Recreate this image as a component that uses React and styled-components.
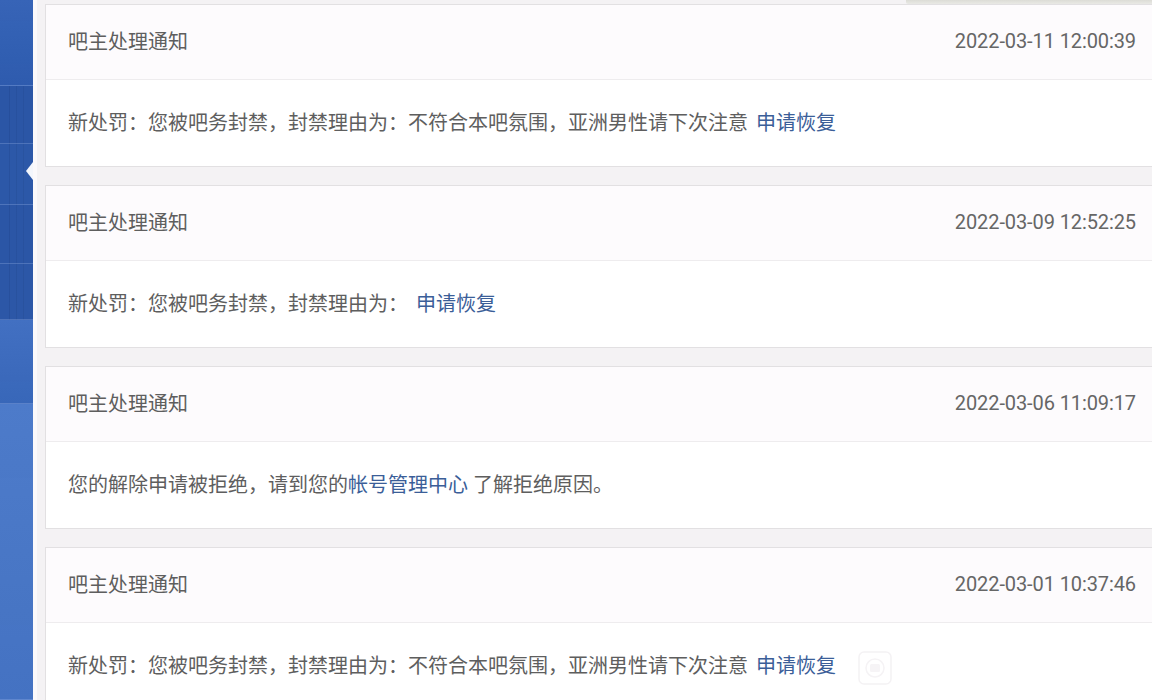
import React from "react";
import styled, { createGlobalStyle } from "styled-components";

const GlobalStyle = createGlobalStyle`
  html, body {
    margin: 0;
    padding: 0;
    height: 100%;
    overflow: hidden;
    background: #f4f2f4;
  }
  #root {
    height: 100%;
  }
`;

const Page = styled.div`
  display: flex;
  height: 700px;
  font-family: Roboto, "Noto Sans CJK SC", sans-serif;
`;

const Sidebar = styled.aside`
  position: relative;
  flex: 0 0 33px;
  display: flex;
  flex-direction: column;
  border-right: 4px solid #fbf9fb;
`;

const Segment = styled.div`
  height: ${(p) => p.h}px;
  flex: ${(p) => (p.grow ? 1 : "none")};
  background-color: ${(p) => p.color};
  border-bottom: 1px solid rgba(120, 150, 210, 0.45);
  background-image: ${(p) =>
    p.lined
      ? "repeating-linear-gradient(90deg, transparent 0 9px, rgba(20, 50, 110, 0.18) 9px 10px, transparent 10px 16px, rgba(20, 50, 110, 0.14) 16px 17px, transparent 17px 23px, rgba(20, 50, 110, 0.14) 23px 24px, transparent 24px 33px)"
      : "linear-gradient(180deg, rgba(255,255,255,0.04), rgba(0,0,0,0.03))"};
`;

const Pointer = styled.div`
  position: absolute;
  right: 0;
  top: 162px;
  width: 0;
  height: 0;
  border-top: 9px solid transparent;
  border-bottom: 9px solid transparent;
  border-right: 7px solid #f3f6fc;
`;

const Main = styled.main`
  flex: 1;
  display: flex;
  flex-direction: column;
  padding-left: 8px;
  background: #f4f2f4;
  overflow: hidden;
`;

const TopStrip = styled.div`
  height: 5px;
  display: flex;
  justify-content: flex-end;
`;

const Shade = styled.div`
  width: 246px;
  height: 4px;
  background: linear-gradient(180deg, #dcdcd6, #e9e9e5);
  border-radius: 0 0 0 2px;
`;

const List = styled.div`
  display: flex;
  flex-direction: column;
  gap: 18px;
`;

const Card = styled.section`
  border: 1px solid #e2e0e2;
  border-right: none;
  background: #ffffff;
  flex: none;
`;

const CardHeader = styled.header`
  height: 75px;
  display: flex;
  align-items: center;
  justify-content: space-between;
  padding: 0 16px 3px 22px;
  box-sizing: border-box;
  background: #fdfbfd;
  border-bottom: 1px solid #eeecee;
  font-size: 20px;
  color: #5e5e5e;
`;

const Time = styled.span`
  font-size: 20px;
  color: #666666;
  letter-spacing: -0.1px;
`;

const CardBody = styled.div`
  height: 86px;
  display: flex;
  align-items: center;
  padding: 0 22px 3px;
  box-sizing: border-box;
  font-size: 20px;
  color: #5e5e5e;
  white-space: pre;
`;

const Link = styled.a`
  color: #3b5e98;
  text-decoration: none;
  cursor: pointer;
  margin-left: ${(p) => (p.$spaced ? "8px" : "0")};
`;

const Watermark = styled.span`
  display: inline-flex;
  margin-left: 22px;
  margin-top: 6px;
`;

const notices = [
  {
    time: "2022-03-11 12:00:39",
    body: (
      <>
        <span>新处罚：您被吧务封禁，封禁理由为：不符合本吧氛围，亚洲男性请下次注意</span>
        <Link $spaced>申请恢复</Link>
      </>
    ),
  },
  {
    time: "2022-03-09 12:52:25",
    body: (
      <>
        <span>新处罚：您被吧务封禁，封禁理由为：</span>
        <Link $spaced>申请恢复</Link>
      </>
    ),
  },
  {
    time: "2022-03-06 11:09:17",
    body: (
      <>
        <span>您的解除申请被拒绝，请到您的</span>
        <Link>帐号管理中心</Link>
        <span>{" 了解拒绝原因。"}</span>
      </>
    ),
  },
  {
    time: "2022-03-01 10:37:46",
    body: (
      <>
        <span>新处罚：您被吧务封禁，封禁理由为：不符合本吧氛围，亚洲男性请下次注意</span>
        <Link $spaced>申请恢复</Link>
        <Watermark>
          <svg width="34" height="34" viewBox="0 0 34 34" fill="none">
            <rect x="1" y="1" width="32" height="32" rx="5" stroke="#f4f2f4" strokeWidth="1.5" />
            <circle cx="17" cy="17" r="9" stroke="#f5f3f5" strokeWidth="1.5" />
            <rect x="12" y="13" width="10" height="8" rx="1.5" fill="#f6f4f6" />
          </svg>
        </Watermark>
      </>
    ),
  },
];

const App = () => {
  return (
    <Page>
      <GlobalStyle />
      <Sidebar>
        <Segment h={85} color="#2f5eb4" />
        <Segment h={57} color="#2b56a6" lined />
        <Segment h={60} color="#2c58a8" lined />
        <Segment h={58} color="#2b56a6" lined />
        <Segment h={55} color="#2c57a7" lined />
        <Segment h={83} color="#3a6abf" />
        <Segment grow color="#4676c8" />
        <Pointer />
      </Sidebar>
      <Main>
        <TopStrip>
          <Shade />
        </TopStrip>
        <List>
          {notices.map((n) => (
            <Card key={n.time}>
              <CardHeader>
                <span>吧主处理通知</span>
                <Time>{n.time}</Time>
              </CardHeader>
              <CardBody>{n.body}</CardBody>
            </Card>
          ))}
        </List>
      </Main>
    </Page>
  );
};

export default App;
